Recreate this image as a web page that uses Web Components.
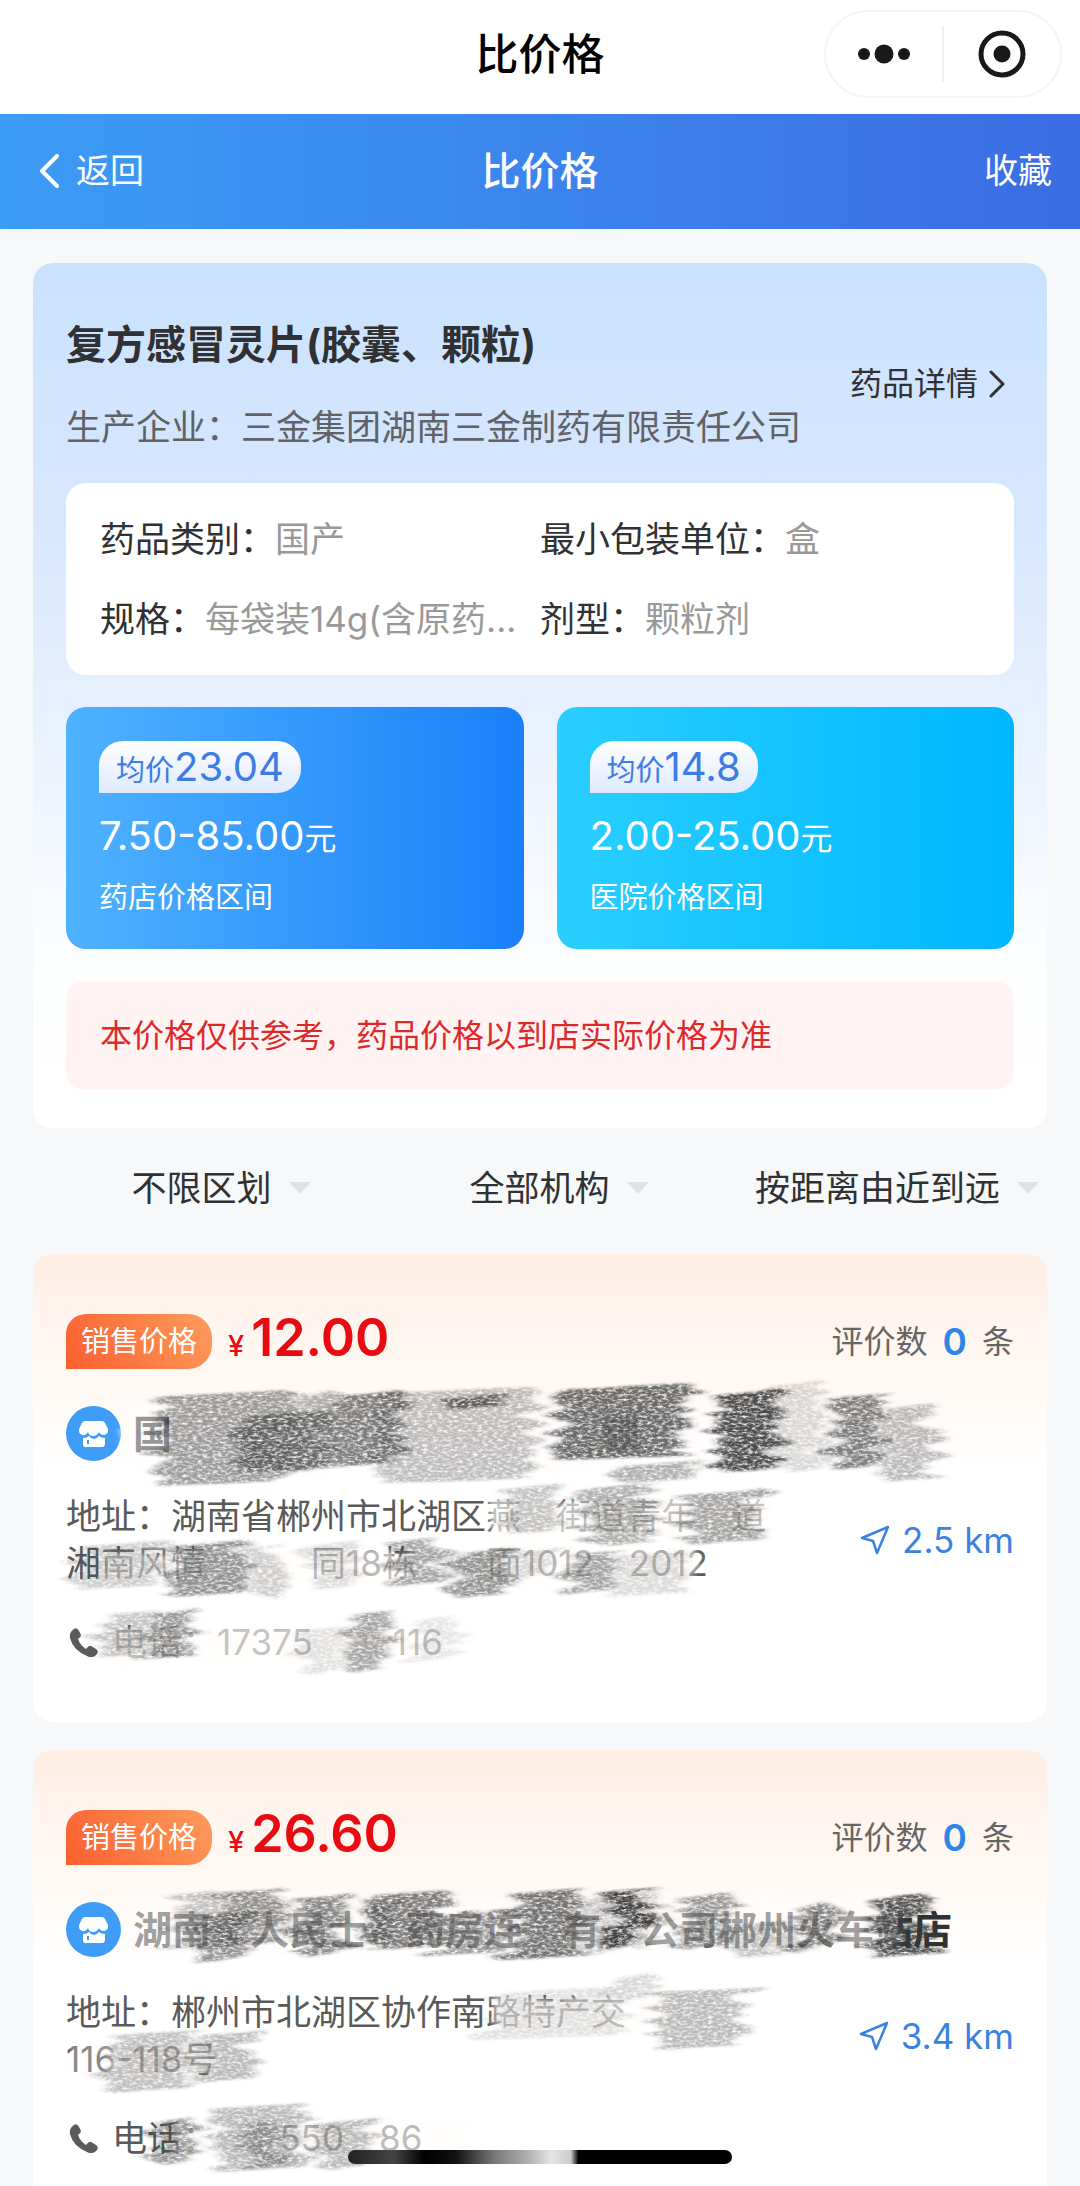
<!DOCTYPE html>
<html lang="zh-CN">
<head>
<meta charset="utf-8">
<meta name="viewport" content="width=device-width, initial-scale=1">
<title>比价格</title>
<style>
  html, body { margin: 0; height: 100%; }
  body { font-family: Inter, "Noto Sans CJK SC", sans-serif; color: #333; background: #f6f8fa; }
</style>
</head>
<body>
<price-app></price-app>

<template id="t-app">
  <style>
    :host { display: flex; flex-direction: column; position: relative; height: 100vh; overflow: hidden; background: #f6f8fa; }
    main { flex: 1; min-height: 0; overflow-y: auto; scrollbar-width: none; padding: 34px 33px 0; }
    .list { display: flex; flex-direction: column; gap: 28px; padding-bottom: 60px; }
    home-bar { position: absolute; left: 0; right: 0; bottom: 22px; }
  </style>
  <mini-bar>比价格</mini-bar>
  <nav-bar>比价格</nav-bar>
  <main>
    <drug-card></drug-card>
    <filter-bar></filter-bar>
    <div class="list">
      <store-card price="12.00" km="2.5" marks="first">
        <span slot="name">国　　　　　　　　　　　锁</span>
        <span slot="address">地址：湖南省郴州市北湖区燕　街道青年　道<br>湘南风情　　　同18栋　　面1012　2012</span>
        <span slot="phone">电话：17375　　 116</span>
      </store-card>
      <store-card price="26.60" km="3.4" marks="second">
        <span slot="name">湖南　人民士　药房连　有　公司郴州火车站店</span>
        <span slot="address">地址：郴州市北湖区协作南路特产交<br>116-118号</span>
        <span slot="phone">电话：　　 550　86</span>
      </store-card>
    </div>
  </main>
  <home-bar></home-bar>
</template>

<template id="t-mini">
  <style>
    :host { display: grid; grid-template-columns: 1fr auto 1fr; align-items: center; height: 114px; padding: 0 18px 6px; box-sizing: border-box; background: #fff; }
    h1 { grid-column: 2; margin: 0; font-size: 43px; line-height: 60px; font-weight: 500; color: #000; }
    .capsule { justify-self: end; display: flex; align-items: center; width: 238px; height: 88px; box-sizing: border-box; border: 2px solid #f5f5f5; border-radius: 44px; }
    button { flex: 1; display: flex; justify-content: center; border: 0; background: none; padding: 0; }
    i { width: 2px; height: 56px; background: #f1f1f1; }
    svg { display: block; }
  </style>
  <h1><slot></slot></h1>
  <div class="capsule">
    <button aria-label="更多"><svg width="52" height="20" viewBox="0 0 52 20" fill="#191919"><circle cx="6" cy="10" r="6"/><circle cx="26" cy="10" r="9.500"/><circle cx="46" cy="10" r="6"/></svg></button>
    <i></i>
    <button aria-label="关闭"><svg width="48" height="48" viewBox="0 0 48 48"><circle cx="24" cy="24" r="21" fill="none" stroke="#191919" stroke-width="5"/><circle cx="24" cy="24" r="8.500" fill="#191919"/></svg></button>
  </div>
</template>

<template id="t-nav">
  <style>
    :host { display: grid; grid-template-columns: 1fr auto 1fr; align-items: center; height: 115px; padding: 0 28px 2px; box-sizing: border-box; color: #fff; background: linear-gradient(90deg, #3c9cf6, #3b6de4); }
    h2 { margin: 0; font-size: 39px; line-height: 56px; font-weight: 500; }
    a, button { display: flex; align-items: center; gap: 16px; font: inherit; font-size: 34px; line-height: 48px; color: #fff; text-decoration: none; border: 0; background: none; padding: 0; }
    a { padding-left: 10px; }
    button { justify-self: end; }
  </style>
  <a href="#back"><svg width="22" height="34" viewBox="0 0 22 34" fill="none" stroke="#fff" stroke-width="4" stroke-linecap="round" stroke-linejoin="round"><path d="M19 2 4 17l15 15"/></svg>返回</a>
  <h2><slot></slot></h2>
  <button>收藏</button>
</template>

<template id="t-drug">
  <style>
    :host { display: block; padding: 54px 33px 39px; border-radius: 20px; background: linear-gradient(180deg, #c9e2fe, #d9e8fe 32%, #fdfefe 82%, #fff); }
    header { display: flex; align-items: center; justify-content: space-between; margin-bottom: 32px; }
    h3 { margin: 0 0 30px; font-size: 40px; line-height: 56px; font-weight: 700; color: #303133; }
    p { margin: 0; font-size: 35px; line-height: 48px; color: #606266; }
    a { display: flex; align-items: center; gap: 11px; font-size: 32px; line-height: 48px; color: #303133; text-decoration: none; margin-right: 9px; white-space: nowrap; }
    dl { display: grid; grid-template-columns: 440px 1fr; margin: 0 0 32px; padding: 16px 34px; border-radius: 20px; background: #fff; font-size: 35px; line-height: 80px; }
    dl div { display: flex; white-space: nowrap; }
    dt { color: #303133; } dd { margin: 0; color: #999; }
    .prices { display: grid; grid-template-columns: 1fr 1fr; gap: 33px; margin-bottom: 33px; }
    .warn { padding: 0 34px; border-radius: 16px; background: #fff4f3; color: #dc2a2a; font-size: 32px; line-height: 107px; }
  </style>
  <header>
    <div><h3>复方感冒灵片(胶囊、颗粒)</h3><p>生产企业：三金集团湖南三金制药有限责任公司</p></div>
    <a href="#detail">药品详情<svg width="16" height="28" viewBox="0 0 16 28" fill="none" stroke="#303133" stroke-width="3" stroke-linecap="round" stroke-linejoin="round"><path d="M2 2l12 12L2 26"/></svg></a>
  </header>
  <dl>
    <div><dt>药品类别：</dt><dd>国产</dd></div>
    <div><dt>最小包装单位：</dt><dd>盒</dd></div>
    <div><dt>规格：</dt><dd>每袋装14g(含原药...</dd></div>
    <div><dt>剂型：</dt><dd>颗粒剂</dd></div>
  </dl>
  <div class="prices">
    <price-tile avg="23.04" range="7.50-85.00" style="--from:#4fb2ff;--to:#1a80fa">药店价格区间</price-tile>
    <price-tile avg="14.8" range="2.00-25.00" style="--from:#2acfff;--to:#00b7ff">医院价格区间</price-tile>
  </div>
  <p class="warn">本价格仅供参考，药品价格以到店实际价格为准</p>
</template>

<template id="t-tile">
  <style>
    :host { display: flex; flex-direction: column; align-items: flex-start; padding: 34px 33px 31px; border-radius: 20px; color: #fff; background: linear-gradient(90deg, var(--from), var(--to)); }
    .avg { padding: 0 17px; border-radius: 24px 24px 24px 0; background: linear-gradient(180deg, #fff, #dfeafd); color: #3d7de3; font-size: 29px; line-height: 52px; height: 52px; white-space: nowrap; }
    b { font-weight: 400; font-size: 40px; }
    .range { margin: 19px 0 18px; font-size: 32px; line-height: 48px; height: 48px; white-space: nowrap; }
    .label { font-size: 29px; line-height: 40px; }
  </style>
  <div class="avg">均价<b class="a"></b></div>
  <div class="range"><b class="r"></b>元</div>
  <div class="label"><slot></slot></div>
</template>

<template id="t-filter">
  <style>
    :host { display: grid; grid-template-columns: repeat(3, 1fr); height: 120px; padding-bottom: 6px; }
    label { display: flex; align-items: center; justify-content: center; gap: 16px; padding-left: 38px; }
    select { appearance: none; border: 0; background: none; padding: 0; margin: 0; font: inherit; font-size: 35px; line-height: 48px; height: 48px; color: #303133; }
    svg { flex: none; }
  </style>
  <label><select aria-label="区划"><option>不限区划</option></select><svg width="22" height="12" viewBox="0 0 22 12"><path d="M0 0h22L11 12z" fill="#dfe1e3"/></svg></label>
  <label><select aria-label="机构"><option>全部机构</option></select><svg width="22" height="12" viewBox="0 0 22 12"><path d="M0 0h22L11 12z" fill="#dfe1e3"/></svg></label>
  <label><select aria-label="排序"><option>按距离由近到远</option></select><svg width="22" height="12" viewBox="0 0 22 12"><path d="M0 0h22L11 12z" fill="#dfe1e3"/></svg></label>
</template>

<template id="t-store">
  <style>
    :host { display: block; position: relative; padding: 60px 33px 56px; border-radius: 20px; background: linear-gradient(180deg, #ffeee3, #fff4ee 60px, #fff9f4 130px, #fff 220px); }
    .row { display: flex; align-items: center; }
    .top { height: 55px; margin-bottom: 37px; }
    .badge { padding: 0 15px; border-radius: 20px 24px 24px 0; color: #fff; background: linear-gradient(60deg, #fb5f30, #fd9c5c); font-size: 29px; line-height: 55px; }
    .price { margin-left: 16px; color: #e80c12; font-weight: 600; font-size: 52px; line-height: 55px; white-space: nowrap; }
    .price small { font-weight: 500; font-size: 29px; margin-right: 7px; }
    .count { margin-left: auto; display: flex; align-items: center; gap: 15px; font-size: 32px; line-height: 48px; color: #666; }
    .count b { font-size: 37px; font-weight: 600; color: #2f86e8; }
    .title { height: 55px; gap: 12px; margin-bottom: 32px; }
    .title h4 { margin: 0; font-size: 39px; line-height: 55px; font-weight: 700; color: #303133; white-space: pre; }
    .info { justify-content: space-between; }
    address { font-style: normal; font-size: 35px; line-height: 47px; color: #5a5a5a; white-space: nowrap; }
    .km { display: flex; align-items: center; gap: 12px; font-size: 35px; line-height: 48px; color: #3b82e0; text-decoration: none; white-space: nowrap; }
    .tel { gap: 14px; margin-top: 31px; padding-left: 3px; font-size: 35px; line-height: 48px; color: #5a5a5a; text-decoration: none; white-space: pre; }
    svg { flex: none; display: block; }
    pencil-marks { position: absolute; inset: 0; pointer-events: none; }
  </style>
  <div class="row top">
    <span class="badge">销售价格</span>
    <span class="price"><small>¥</small><span class="p"></span></span>
    <span class="count"><span>评价数</span><b>0</b><span>条</span></span>
  </div>
  <div class="row title">
    <svg width="55" height="55" viewBox="0 0 55 55"><circle cx="27.500" cy="27.500" r="27.500" fill="#3f9df8"/><path fill="#fff" d="M19 15h17q2 0 3 2l3 6v2q0 3-4 4-4 0-5-3-2 4-6 4t-5-4q-2 4-5 3-4-1-4-4v-2l3-6q1-2 3-2zM17 32q4 0 6-2 2 3 5 3t5-3q2 2 6 2v6q0 3-3 3H19q-2 0-2-3z"/><path d="M22 34v4" stroke="#3f9df8" stroke-width="2"/></svg>
    <h4><slot name="name"></slot></h4>
  </div>
  <div class="row info">
    <address><slot name="address"></slot></address>
    <a class="km" href="#map"><svg width="30" height="30" viewBox="0 0 30 30" fill="none" stroke="#3b82e0" stroke-width="2.500" stroke-linejoin="round"><path d="M28 2 17 28 13 16 2 13z"/></svg><span class="k"></span></a>
  </div>
  <a class="row tel" href="#tel"><svg width="29" height="29" viewBox="0 0 29 29"><path fill="#5a5a5a" d="M5 1Q8-1 10 3l2 4q0 2-3 4 2 6 8 10 3-4 5-3l5 3q3 2 1 5-4 5-10 2Q4 22 1 10 0 4 5 1z"/></svg><slot name="phone"></slot></a>
  <pencil-marks></pencil-marks>
</template>

<template id="t-home">
  <style>
    :host { display: flex; justify-content: center; pointer-events: none; }
    div { width: 384px; height: 14px; border-radius: 7px; background: linear-gradient(90deg, #222, #444 12%, #000 20%, #111 28%, #777 38%, #aaa 46%, #e5e5e5 53%, #ccc 58%, #000 60%); }
  </style>
  <div></div>
</template>

<script>
class Base extends HTMLElement {
  constructor() {
    super();
    this.attachShadow({ mode: 'open' });
    const t = document.getElementById(this.constructor.tpl);
    if (t) this.shadowRoot.append(t.content.cloneNode(true));
  }
  $(s) { return this.shadowRoot.querySelector(s); }
}
const simple = (name, tpl) => customElements.define(name, class extends Base { static tpl = tpl; });

// Graphite patches: [x, y, width, height, opacity]; veils are pale eraser strokes.
const MARKS = {
  first: {
    veils: [[90,148,50,64,.5],[150,150,750,70,.6],[455,238,285,50,.65],[66,290,600,46,.6],[76,366,350,46,.65]],
    marks: [[126,136,137,96,.5],[203,156,96,62,.6],[263,136,40,77,.4],[299,136,72,77,.65],[346,133,157,96,.33],[403,139,67,17,.7],
      [524,129,131,77,.75],[593,206,76,23,.4],[683,134,62,84,.9],[745,126,44,93,.2],[798,139,53,77,.65],[851,149,52,79,.35],
      [470,229,60,51,.3],[552,229,69,63,.4],[652,234,72,57,.45],
      [40,286,91,50,.25],[138,286,79,57,.55],[217,290,33,55,.25],[274,286,50,50,.18],[360,283,53,50,.45],[420,293,58,51,.55],[478,293,39,33,.2],[533,296,53,45,.45],[586,296,69,47,.18],
      [63,356,47,48,.3],[110,354,50,52,.5],[267,372,43,49,.15],[313,356,43,63,.45],[378,361,46,49,.12]]
  },
  second: {
    veils: [[95,150,775,55,.55],[458,240,190,46,.65],[70,286,150,42,.5],[34,286,50,42,.3],[140,366,300,48,.6]],
    marks: [[142,140,46,60,.3],[163,160,50,53,.55],[185,138,64,59,.55],[260,143,53,64,.6],[331,140,82,60,.65],[335,150,28,46,.4],[406,160,61,47,.5],
      [478,138,74,72,.7],[552,145,24,60,.25],[576,137,39,63,.95],[610,140,22,60,.25],[650,142,50,58,.5],[700,170,51,38,.3],[758,152,45,51,.6],[839,143,61,65,.85],
      [456,237,134,53,.15],[621,237,89,63,.35],[583,223,44,27,.2],[74,280,86,63,.32],[165,280,59,53,.35],
      [117,367,46,48,.5],[181,353,93,69,.35],[210,370,40,50,.35],[285,367,53,53,.35]]
  }
};
class PencilMarks extends Base {
  draw(set) {
    const shape = ([x, y, w, h, o], c) =>
      `<path d="M${x + 3} ${y + 6}L${x + w} ${y}L${x + w - 4} ${y + h - 5}L${x} ${y + h}Z" fill="${c}" opacity="${o}"/>`;
    this.shadowRoot.innerHTML = `
      <style>:host{display:block;overflow:hidden}svg{display:block}</style>
      <svg width="1014" height="468" viewBox="0 0 1014 468" aria-hidden="true">
        <defs>
          <filter id="veil" x="0" y="0" width="1014" height="468" filterUnits="userSpaceOnUse">
            <feTurbulence type="fractalNoise" baseFrequency="0.02 0.16" numOctaves="2" seed="4" result="n"/>
            <feDisplacementMap in="SourceGraphic" in2="n" scale="30" xChannelSelector="R" yChannelSelector="A"/>
            <feGaussianBlur stdDeviation="2"/>
          </filter>
          <filter id="grain" x="0" y="0" width="1014" height="468" filterUnits="userSpaceOnUse" color-interpolation-filters="sRGB">
            <feTurbulence type="fractalNoise" baseFrequency="0.006 0.12" numOctaves="2" seed="7"/>
            <feColorMatrix values="1 0 0 0 0  0 0 0 0 0.5  0 0 0 0 0.5  0 0 0 0 1" result="edge"/>
            <feDisplacementMap in="SourceGraphic" in2="edge" scale="70" xChannelSelector="R" yChannelSelector="G" result="d"/>
            <feGaussianBlur in="d" stdDeviation="4 1" result="s"/>
            <feTurbulence type="fractalNoise" baseFrequency="0.2 0.42" numOctaves="4" seed="2"/>
            <feColorMatrix values="0 0 0 0 0  0 0 0 0 0  0 0 0 0 0  0 2.2 0 0 -0.3" result="g"/>
            <feComposite in="s" in2="g" operator="in"/>
          </filter>
        </defs>
        <g filter="url(#veil)">${set.veils.map(m => shape(m, '#fffdfb')).join('')}</g>
        <g filter="url(#grain)">${set.marks.map(m => shape(m, '#3a3a3a')).join('')}</g>
      </svg>`;
  }
}
customElements.define('pencil-marks', PencilMarks);

customElements.define('price-tile', class extends Base {
  static tpl = 't-tile';
  connectedCallback() {
    this.$('.a').textContent = this.getAttribute('avg');
    this.$('.r').textContent = this.getAttribute('range');
  }
});
customElements.define('store-card', class extends Base {
  static tpl = 't-store';
  connectedCallback() {
    this.$('.p').textContent = this.getAttribute('price');
    this.$('.k').textContent = this.getAttribute('km') + ' km';
    this.$('pencil-marks').draw(MARKS[this.getAttribute('marks')]);
  }
});
simple('mini-bar', 't-mini');
simple('nav-bar', 't-nav');
simple('drug-card', 't-drug');
simple('filter-bar', 't-filter');
simple('home-bar', 't-home');
simple('price-app', 't-app');
</script>
</body>
</html>
